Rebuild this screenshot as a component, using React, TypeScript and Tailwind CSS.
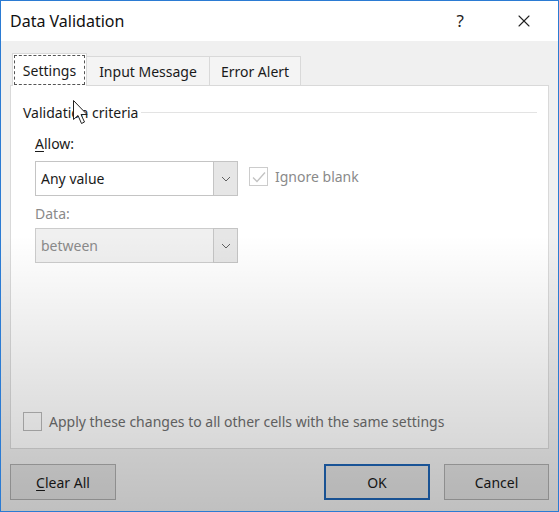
import { X } from "lucide-react";

function Chevron() {
  return (
    <svg width="10" height="6" viewBox="0 0 10 6" fill="none">
      <path d="M1 1l4 4 4-4" stroke="#606060" strokeWidth="1" />
    </svg>
  );
}

function Combo({ value, disabled }: { value: string; disabled?: boolean }) {
  return (
    <div
      className={`flex h-[35px] w-[203px] border ${
        disabled ? "border-[#cccccc] bg-[#f0f0f0]" : "border-[#c4c4c4] bg-white"
      }`}
    >
      <div className={`flex flex-1 items-center pl-[5px] ${disabled ? "text-[#8a8a8a]" : "text-[#1a1a1a]"}`}>
        {value}
      </div>
      <div className="my-[-1px] mr-[-1px] flex w-[25px] items-center justify-center border border-[#c4c4c4] bg-[#e6e6e6]">
        <Chevron />
      </div>
    </div>
  );
}

function Cursor() {
  return (
    <svg className="absolute left-[72px] top-[99px]" width="16" height="26" viewBox="0 0 16 26">
      <path
        d="M0.5 0.5 L0.5 19.5 L5 15.5 L8.5 23.5 L11.5 22 L8 14.5 L14 14.5 Z"
        fill="white"
        stroke="#222"
        strokeWidth="1"
        strokeLinejoin="round"
      />
    </svg>
  );
}

function App() {
  const font = { fontFamily: '"Noto Sans", "Segoe UI", sans-serif' };

  return (
    <div
      className="relative h-[512px] w-[559px] overflow-hidden border border-[#2b7bd3] bg-[#f0f0f0] text-[14px] text-[#1a1a1a]"
      style={font}
    >
      {/* title bar */}
      <div className="flex h-[40px] items-center bg-white pl-[9px]">
        <span className="text-[16px] text-[#111]">Data Validation</span>
        <span className="ml-auto mr-[50px] text-[17px] text-[#222]">?</span>
        <X size={20} strokeWidth={1.3} className="mr-[24px] text-[#222]" />
      </div>

      {/* tabs */}
      <div className="flex items-end pl-[11px] pt-[12px]">
        <div className="relative z-10 mb-[-1px] flex h-[33px] w-[75px] items-center justify-center border border-b-0 border-[#d9d9d9] bg-white">
          <div className="absolute inset-[1px] border border-dashed border-[#555]" />
          Settings
        </div>
        <div className="flex h-[29px] w-[123px] items-center justify-center border border-l-0 border-b-0 border-[#d9d9d9] bg-[#f4f4f4]">
          Input Message
        </div>
        <div className="flex h-[29px] w-[91px] items-center justify-center border border-l-0 border-b-0 border-[#d9d9d9] bg-[#f4f4f4]">
          Error Alert
        </div>
      </div>

      {/* panel */}
      <div className="mx-[9px] flex h-[364px] flex-col border border-[#d9d9d9] bg-white px-[12px]">
        <div className="mt-[16px] flex items-center gap-[3px]">
          <span>Validation criteria</span>
          <div className="mr-[-1px] h-px flex-1 bg-[#e3e3e3]" />
        </div>

        <div className="ml-[12px] mt-[10px]">
          <span>
            <span className="underline underline-offset-2">A</span>llow:
          </span>
        </div>
        <div className="ml-[12px] mt-[7px] flex items-start gap-[11px]">
          <Combo value="Any value" />
          <div className="mt-[5px] flex items-center gap-[7px] text-[#8a8a8a]">
            <div className="flex h-[19px] w-[19px] items-center justify-center border border-[#cccccc] bg-white">
              <svg width="14" height="12" viewBox="0 0 14 12" fill="none">
                <path d="M1 6.5l4 4L13 1.5" stroke="#c2c2c2" strokeWidth="1.3" />
              </svg>
            </div>
            Ignore blank
          </div>
        </div>

        <div className="ml-[12px] mt-[7px] text-[#8a8a8a]">Data:</div>
        <div className="ml-[12px] mt-[4px]">
          <Combo value="between" disabled />
        </div>

        <div className="mt-auto mb-[16px] flex items-center gap-[7px] text-[#6e6e6e]">
          <div className="h-[19px] w-[19px] border border-[#b8b8b8] bg-white" />
          Apply these changes to all other cells with the same settings
        </div>
      </div>

      {/* buttons */}
      <div className="mt-[15px] flex px-[9px]">
        <button className="h-[36px] w-[106px] border border-[#adadad] bg-[#e1e1e1]">
          <span className="underline underline-offset-2">C</span>lear All
        </button>
        <button className="ml-auto h-[36px] w-[106px] border-2 border-[#1e64b4] bg-[#e1e1e1]">OK</button>
        <button className="ml-[14px] h-[36px] w-[105px] border border-[#adadad] bg-[#e1e1e1]">Cancel</button>
      </div>

      <Cursor />

      {/* video fade over the lower half */}
      <div className="pointer-events-none absolute inset-0 bg-[linear-gradient(to_bottom,rgba(0,0,0,0)_46%,rgba(0,0,0,0.2)_100%)]" />
    </div>
  );
}

export default App;
